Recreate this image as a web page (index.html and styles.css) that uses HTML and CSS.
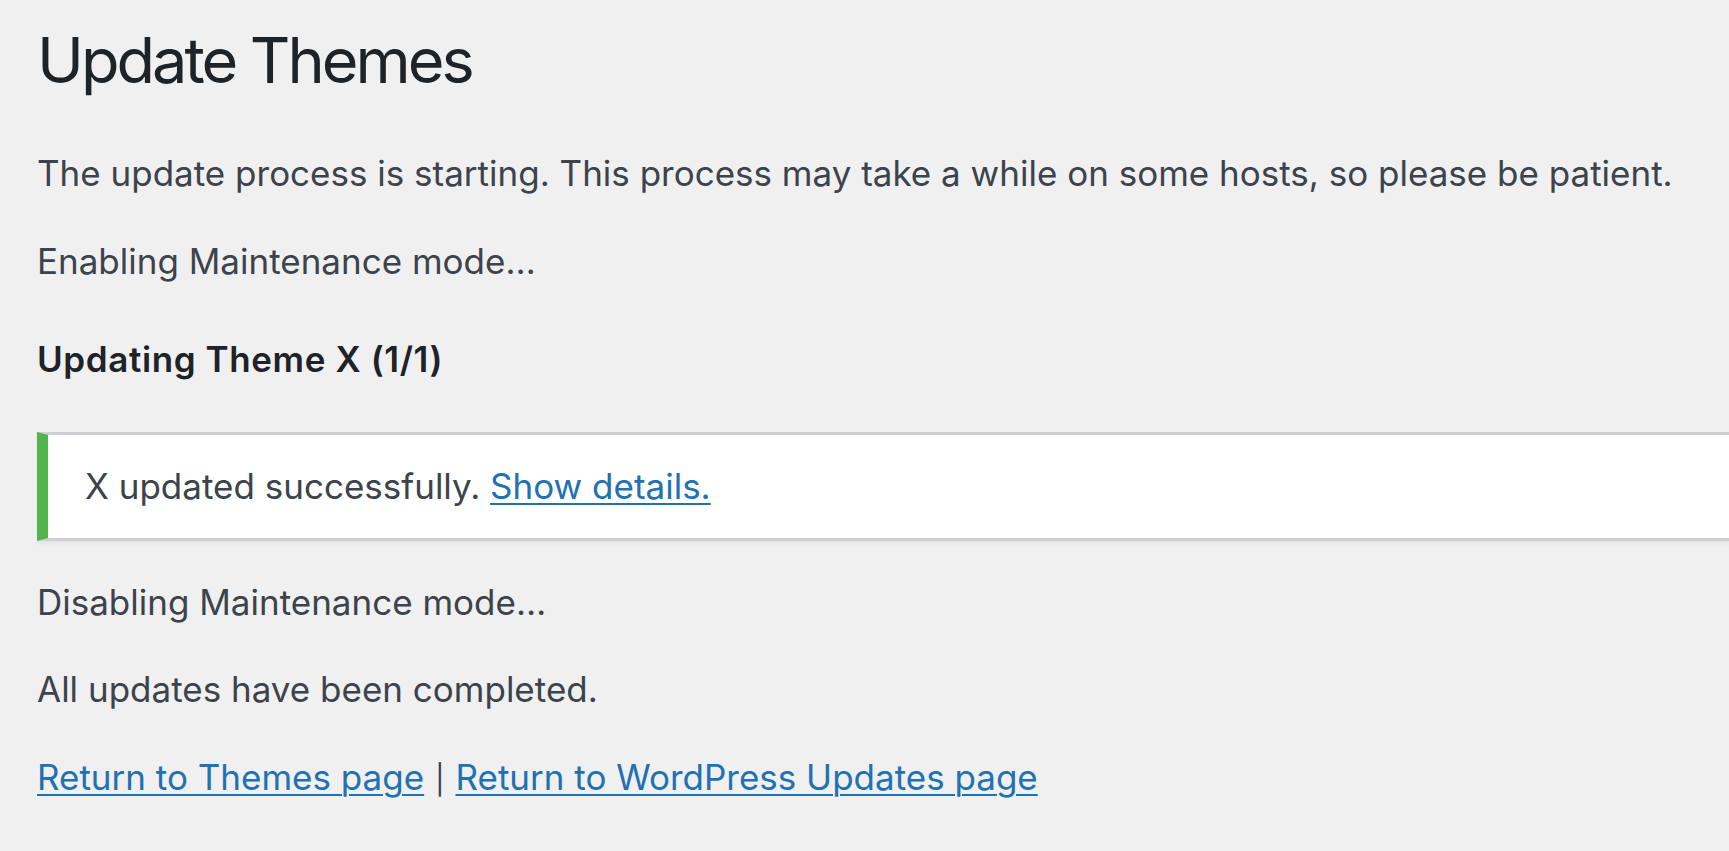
FILE: index.html
```html
<!DOCTYPE html>
<html lang="en">
<head>
<meta charset="utf-8">
<title>Update Themes</title>
<link rel="stylesheet" href="styles.css">
</head>
<body>
<div class="wrap">
  <h1 class="page-title">Update Themes</h1>
  <p class="msg">The update process is starting. This process may take a while on some hosts, so please be patient.</p>
  <p class="msg">Enabling Maintenance mode…</p>
  <h4 class="step-title">Updating Theme X (1/1)</h4>
  <div class="notice notice-success">
    <p class="notice-text">X updated successfully. <a href="#" class="link">Show details.</a></p>
  </div>
  <p class="msg">Disabling Maintenance mode…</p>
  <p class="msg">All updates have been completed.</p>
  <p class="msg"><a href="#" class="link">Return to Themes page</a> <span class="sep">|</span> <a href="#" class="link">Return to WordPress Updates page</a></p>
</div>
</body>
</html>
```
FILE: styles.css
```css
html, body {
  margin: 0;
  padding: 0;
  background: #f0f0f1;
  overflow: hidden;
}
body {
  font-family: "Inter", "Noto Sans", sans-serif;
  color: #3c434a;
  font-size: 35px;
}
.wrap {
  padding: 0 0 0 37px;
  display: flow-root;
}
.page-title {
  margin: 0;
  padding: 18.5px 0 10.5px;
  font-size: 63px;
  line-height: 83px;
  font-weight: 400;
  letter-spacing: -3px;
  color: #1d2327;
}
.msg {
  margin: 35px 0;
  font-size: 35px;
  line-height: 52.5px;
}
.step-title {
  margin: 46px 0 46.8px;
  font-size: 35px;
  line-height: 52.5px;
  font-weight: 600;
  letter-spacing: 0.6px;
  color: #1d2327;
}
.notice {
  background: #fff;
  border-top: 3px solid #cdcfd2;
  border-bottom: 3px solid #cdcfd2;
  border-left: 11px solid #52b54b;
  box-shadow: 0 3px 3px rgba(0, 0, 0, 0.04);
  padding: 3px 32px;
  margin: 0 0 34.5px;
}
.notice-text {
  margin: 17px 0;
  padding: 5px;
  font-size: 35px;
  line-height: 52.5px;
}
.link {
  color: #2271b1;
  text-decoration: underline;
  text-decoration-thickness: 2px;
  text-underline-offset: 4px;
}
.sep {
  font-size: 29px;
  padding: 0 1px;
  color: #3c434a;
}
```
